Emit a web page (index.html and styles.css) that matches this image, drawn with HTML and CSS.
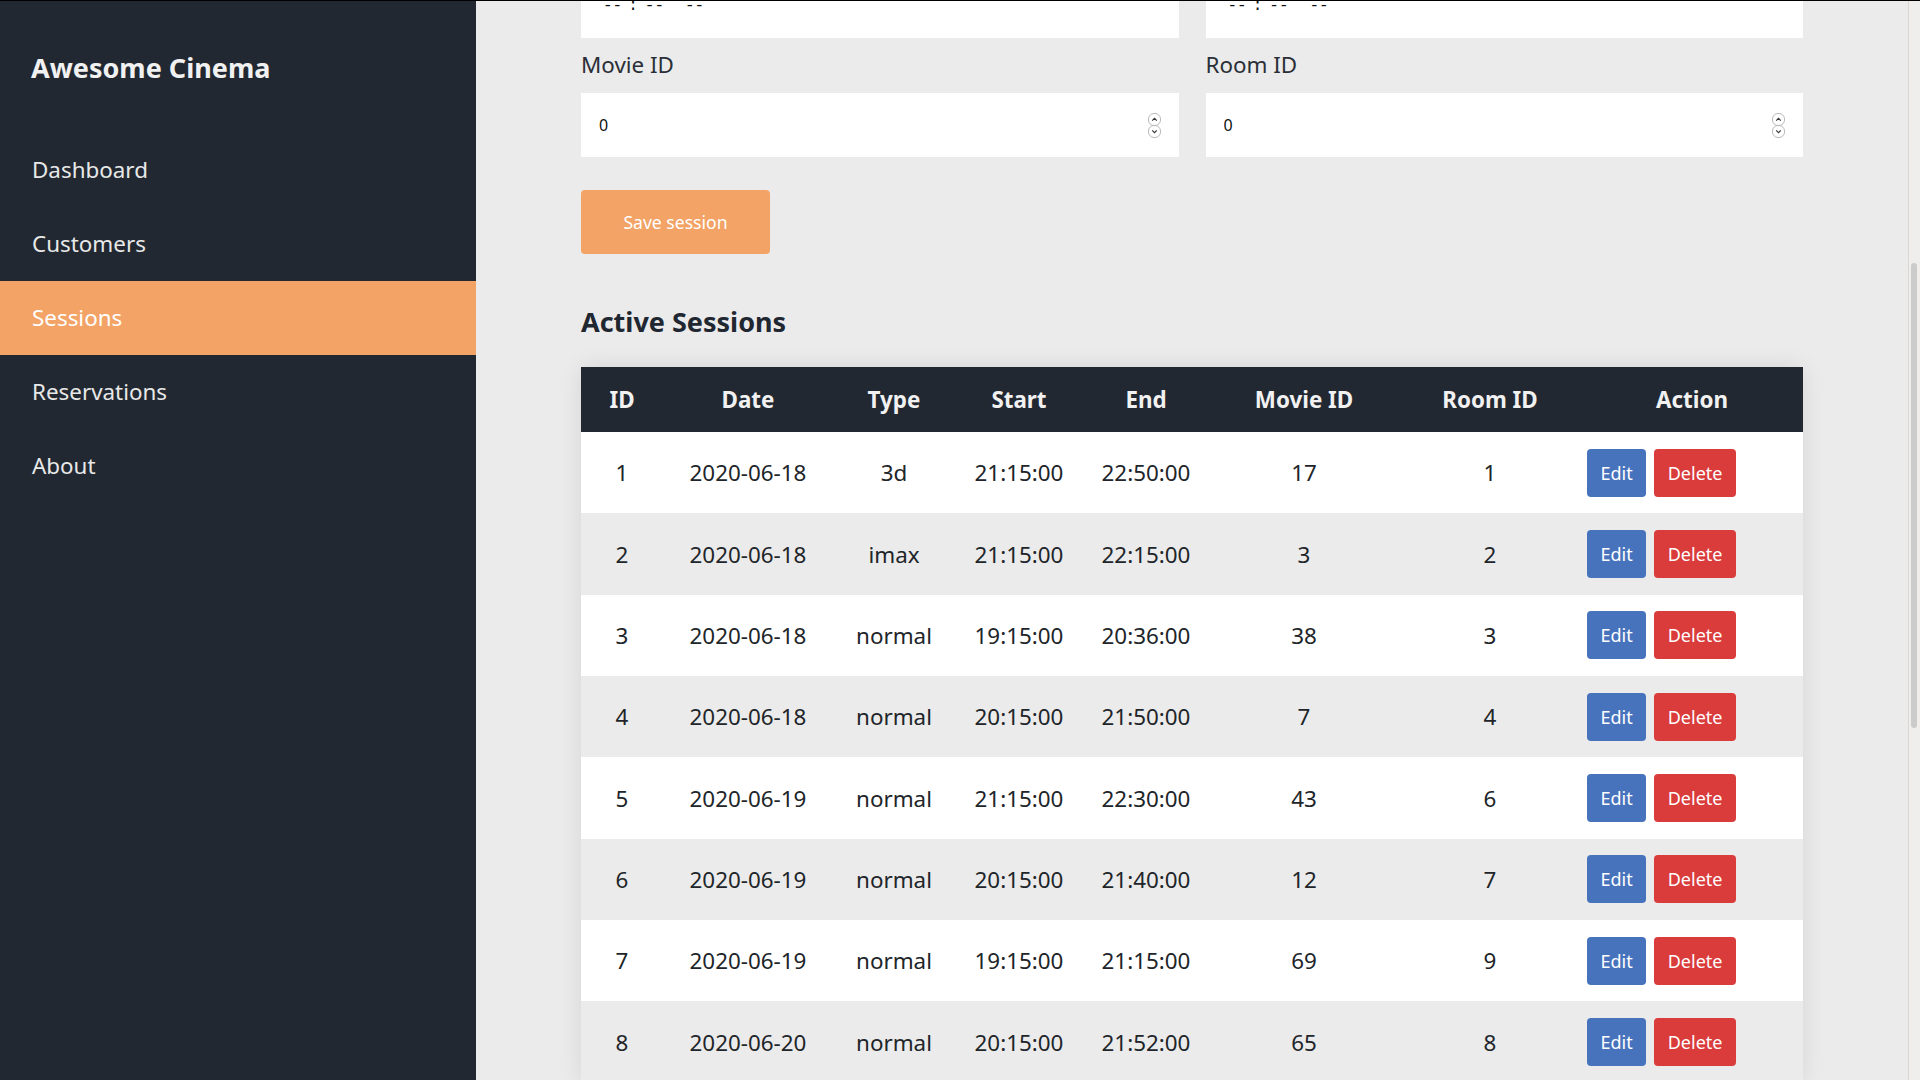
FILE: index.html
```html
<!DOCTYPE html>
<html lang="en">
<head>
<meta charset="utf-8">
<title>Awesome Cinema - Sessions</title>
<link rel="stylesheet" href="styles.css">
</head>
<body>
<div class="app">
  <aside class="sidebar">
    <div class="brand">Awesome Cinema</div>
    <nav class="nav">
      <a class="nav-item" href="#">Dashboard</a>
      <a class="nav-item" href="#">Customers</a>
      <a class="nav-item active" href="#">Sessions</a>
      <a class="nav-item" href="#">Reservations</a>
      <a class="nav-item" href="#">About</a>
    </nav>
  </aside>
  <main class="main">
    <div class="content">
      <form class="form">
        <div class="form-grid">
          <div class="field">
            <div class="input time-input"><span class="seg">--</span><span class="colon">:</span><span class="seg">--</span><span class="seg ampm">--</span></div>
          </div>
          <div class="field">
            <div class="input time-input"><span class="seg">--</span><span class="colon">:</span><span class="seg">--</span><span class="seg ampm">--</span></div>
          </div>
          <div class="field">
            <label class="field-label" for="movie">Movie ID</label>
            <div class="input num-input">
              <input id="movie" class="raw" type="text" value="0">
              <svg class="spin" width="13" height="25" viewBox="0 0 13 25"><rect x="0.5" y="0.5" width="12" height="12" rx="5.5" fill="#fff" stroke="#b9b9b9"/><rect x="0.5" y="12.5" width="12" height="12" rx="5.5" fill="#fff" stroke="#b9b9b9"/><path d="M4.2 7.6 L6.5 5.3 L8.8 7.6" fill="none" stroke="#333" stroke-width="1.1"/><path d="M4.2 17.4 L6.5 19.7 L8.8 17.4" fill="none" stroke="#333" stroke-width="1.1"/></svg>
            </div>
          </div>
          <div class="field">
            <label class="field-label" for="room">Room ID</label>
            <div class="input num-input">
              <input id="room" class="raw" type="text" value="0">
              <svg class="spin" width="13" height="25" viewBox="0 0 13 25"><rect x="0.5" y="0.5" width="12" height="12" rx="5.5" fill="#fff" stroke="#b9b9b9"/><rect x="0.5" y="12.5" width="12" height="12" rx="5.5" fill="#fff" stroke="#b9b9b9"/><path d="M4.2 7.6 L6.5 5.3 L8.8 7.6" fill="none" stroke="#333" stroke-width="1.1"/><path d="M4.2 17.4 L6.5 19.7 L8.8 17.4" fill="none" stroke="#333" stroke-width="1.1"/></svg>
            </div>
          </div>
        </div>
        <button class="btn-save" type="button">Save session</button>
      </form>

      <h2 class="section-title">Active Sessions</h2>

      <table class="sessions">
        <colgroup>
          <col style="width:82px"><col style="width:170px"><col style="width:122px"><col style="width:128px">
          <col style="width:126px"><col style="width:190px"><col style="width:182px"><col style="width:222px">
        </colgroup>
        <thead>
          <tr><th>ID</th><th>Date</th><th>Type</th><th>Start</th><th>End</th><th>Movie ID</th><th>Room ID</th><th>Action</th></tr>
        </thead>
        <tbody>
          <tr><td>1</td><td>2020-06-18</td><td>3d</td><td>21:15:00</td><td>22:50:00</td><td>17</td><td>1</td><td class="actions"><div class="btns"><button class="btn btn-edit">Edit</button><button class="btn btn-delete">Delete</button></div></td></tr>
          <tr><td>2</td><td>2020-06-18</td><td>imax</td><td>21:15:00</td><td>22:15:00</td><td>3</td><td>2</td><td class="actions"><div class="btns"><button class="btn btn-edit">Edit</button><button class="btn btn-delete">Delete</button></div></td></tr>
          <tr><td>3</td><td>2020-06-18</td><td>normal</td><td>19:15:00</td><td>20:36:00</td><td>38</td><td>3</td><td class="actions"><div class="btns"><button class="btn btn-edit">Edit</button><button class="btn btn-delete">Delete</button></div></td></tr>
          <tr><td>4</td><td>2020-06-18</td><td>normal</td><td>20:15:00</td><td>21:50:00</td><td>7</td><td>4</td><td class="actions"><div class="btns"><button class="btn btn-edit">Edit</button><button class="btn btn-delete">Delete</button></div></td></tr>
          <tr><td>5</td><td>2020-06-19</td><td>normal</td><td>21:15:00</td><td>22:30:00</td><td>43</td><td>6</td><td class="actions"><div class="btns"><button class="btn btn-edit">Edit</button><button class="btn btn-delete">Delete</button></div></td></tr>
          <tr><td>6</td><td>2020-06-19</td><td>normal</td><td>20:15:00</td><td>21:40:00</td><td>12</td><td>7</td><td class="actions"><div class="btns"><button class="btn btn-edit">Edit</button><button class="btn btn-delete">Delete</button></div></td></tr>
          <tr><td>7</td><td>2020-06-19</td><td>normal</td><td>19:15:00</td><td>21:15:00</td><td>69</td><td>9</td><td class="actions"><div class="btns"><button class="btn btn-edit">Edit</button><button class="btn btn-delete">Delete</button></div></td></tr>
          <tr><td>8</td><td>2020-06-20</td><td>normal</td><td>20:15:00</td><td>21:52:00</td><td>65</td><td>8</td><td class="actions"><div class="btns"><button class="btn btn-edit">Edit</button><button class="btn btn-delete">Delete</button></div></td></tr>
        </tbody>
      </table>
    </div>
  </main>
  <div class="scrollbar"><div class="thumb"></div></div>
</div>
<script src="script.js"></script>
</body>
</html>
```

FILE: styles.css
```css
* { box-sizing: border-box; }

html, body {
  margin: 0;
  height: 100%;
}

body {
  font-family: "Noto Sans", "Open Sans", sans-serif;
  background: #ebebeb;
  color: #212529;
  border-top: 1px solid #000;
  overflow: hidden;
}

.app {
  display: flex;
  height: calc(100vh - 1px);
}

/* Sidebar */
.sidebar {
  width: 476px;
  flex: none;
  background: #222831;
}

.brand {
  font-size: 27px;
  font-weight: 700;
  line-height: 38px;
  padding: 48px 31px 46px;
  color: #f1f1f1;
}

.nav {
  display: flex;
  flex-direction: column;
}

.nav-item {
  display: block;
  height: 74px;
  line-height: 73px;
  padding-left: 32px;
  font-size: 22.4px;
  color: #e8e8e8;
  text-decoration: none;
}

.nav-item.active {
  background: #f2a365;
  color: #fff;
}

/* Main */
.main {
  flex: 1;
  overflow: hidden;
}

.content {
  width: 1222px;
  margin: 0 auto;
}

.form-grid {
  display: grid;
  grid-template-columns: 1fr 1fr;
  column-gap: 27px;
}

.field {
  display: flex;
  flex-direction: column;
}

.field-label {
  font-size: 22.4px;
  line-height: 30px;
  margin: 12px 0 13px;
  color: #2a2f37;
}

.input {
  height: 64px;
  background: #fff;
  display: flex;
  align-items: center;
  padding: 0 18px;
  font-size: 16px;
}

.time-input {
  padding-left: 22px;
  font-family: "Liberation Mono", monospace;
  font-size: 16px;
  color: #111;
}

.time-input .colon {
  margin: 0 7px 0 6px;
}

.time-input .ampm {
  margin-left: 21px;
}

.num-input {
  justify-content: space-between;
}

.raw {
  border: none;
  outline: none;
  background: transparent;
  font-family: "Noto Sans", sans-serif;
  font-size: 16px;
  color: #111;
  padding: 0;
  width: 200px;
}

.spin {
  display: block;
  flex: none;
}

.btn-save {
  display: block;
  margin-top: 33px;
  height: 64px;
  width: 189px;
  border: none;
  border-radius: 4px;
  background: #f2a365;
  color: #fff;
  font-family: "Noto Sans", sans-serif;
  font-size: 17.6px;
}

.section-title {
  margin: 49px 0 27px;
  font-size: 27px;
  line-height: 37px;
  font-weight: 700;
  color: #212731;
}

/* Table */
.sessions {
  width: 1222px;
  table-layout: fixed;
  border-collapse: collapse;
  box-shadow: 0 0 22px rgba(0, 0, 0, 0.09);
  margin-bottom: 40px;
}

.sessions th {
  height: 65px;
  padding: 0;
  background: #222831;
  color: #f1f1f1;
  font-size: 22.4px;
  font-weight: 700;
  text-align: center;
}

.sessions td {
  height: 81.35px;
  padding: 0;
  font-size: 22.4px;
  text-align: center;
  color: #212529;
}

.sessions tbody tr:nth-child(odd) { background: #fff; }
.sessions tbody tr:nth-child(even) { background: #ebebeb; }

.sessions td.actions {
  text-align: left;
  padding-left: 6px;
}

.btns {
  display: flex;
  gap: 8px;
}

.btn {
  height: 48px;
  padding: 0 13.5px;
  border: none;
  border-radius: 4px;
  color: #fff;
  font-family: "Noto Sans", sans-serif;
  font-size: 18px;
}

.btn-edit { background: #4773bd; }
.btn-delete { background: #da3b3b; }

/* Scrollbar */
.scrollbar {
  width: 12px;
  flex: none;
  background: #efeeec;
  border-left: 1px solid #d9d6d3;
}

.thumb {
  margin: 262px 0 0 2px;
  width: 6px;
  height: 465px;
  border-radius: 3px;
  background: #cbcbcb;
}
```

FILE: script.js
```js
document.querySelector('.main').scrollTop = 27;
```
